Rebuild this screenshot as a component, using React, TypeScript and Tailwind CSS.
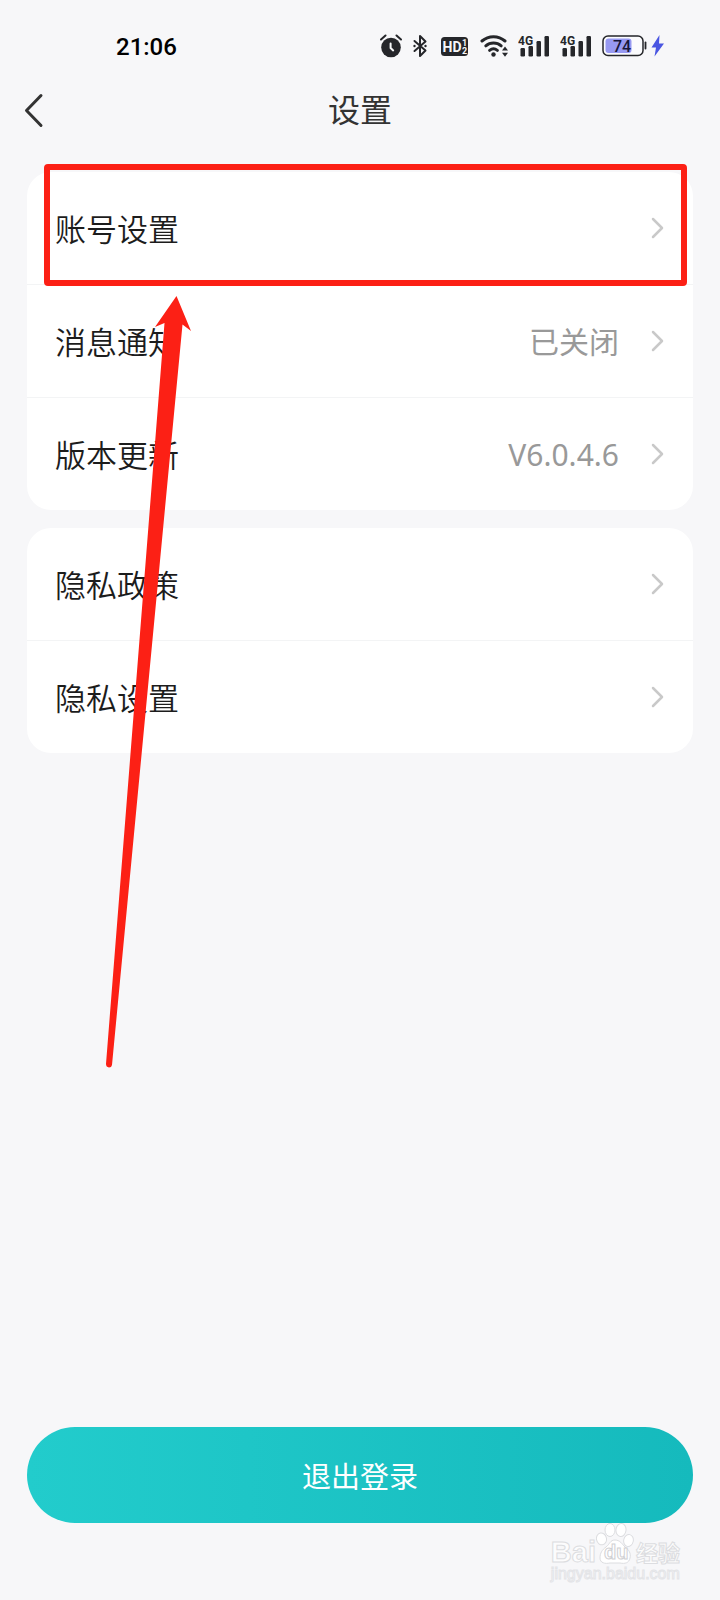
import clsx from "clsx";

type Row = { label: string; value?: string; highlighted?: boolean };

const groups: Row[][] = [
  [
    { label: "账号设置", highlighted: true },
    { label: "消息通知", value: "已关闭" },
    { label: "版本更新", value: "V6.0.4.6" },
  ],
  [{ label: "隐私政策" }, { label: "隐私设置" }],
];

function AlarmIcon() {
  return (
    <svg width="22" height="24" viewBox="0 0 22 24" fill="none">
      <circle cx="11" cy="13.5" r="9.8" fill="#25262a" />
      <path d="M1 5.5 5.5 1.5M21 5.5 16.5 1.5" stroke="#25262a" strokeWidth="2" strokeLinecap="round" />
      <path d="M10.6 9.5v4.5l2.6 2.4" stroke="#f6f7f9" strokeWidth="2" strokeLinecap="round" strokeLinejoin="round" />
    </svg>
  );
}

function BluetoothIcon() {
  return (
    <svg width="16" height="24" viewBox="0 0 16 24" fill="none">
      <path
        d="m2.500 7 11 9.500L8 22V2l5.500 5.500L2.500 17"
        stroke="#25262a"
        strokeWidth="2"
        strokeLinecap="round"
        strokeLinejoin="round"
      />
      <circle cx="2.500" cy="12" r="1.200" fill="#25262a" />
      <circle cx="13.500" cy="12" r="1.200" fill="#25262a" />
    </svg>
  );
}

function HdIcon() {
  return (
    <svg width="32" height="24" viewBox="0 0 32 24">
      <rect x="3" y="3" width="27" height="19" rx="3.500" fill="#25262a" />
      <g fill="#f6f7f9" fontFamily="Roboto, sans-serif" fontWeight="700">
        <text x="4.500" y="17.500" fontSize="14">HD</text>
        <text x="24" y="12" fontSize="9">1</text>
        <text x="24" y="20" fontSize="9">2</text>
      </g>
    </svg>
  );
}

function WifiIcon() {
  return (
    <svg width="28" height="24" viewBox="0 0 28 24" fill="none">
      <g stroke="#25262a" strokeWidth="3" strokeLinecap="round">
        <path d="M2 7a17.500 17.500 0 0 1 23 0" />
        <path d="M5.800 11.800a11.800 11.800 0 0 1 15.400 0" />
        <path d="M9.600 16.300a6.200 6.200 0 0 1 7.800 0" />
      </g>
      <circle cx="13.500" cy="20.500" r="2.200" fill="#25262a" />
      <path d="m22 16.500 3-4 3 4zM22 18.800h6l-3 4z" fill="#25262a" />
    </svg>
  );
}

function SignalIcon() {
  return (
    <svg width="32" height="24" viewBox="0 0 32 24">
      <text x="0" y="11" fontSize="12" fontFamily="Roboto, sans-serif" fontWeight="700" fill="#25262a">
        4G
      </text>
      <g fill="#25262a">
        <rect x="2.500" y="14" width="4.500" height="8.500" rx="1.200" />
        <rect x="10.500" y="12" width="4.500" height="10.500" rx="1.200" />
        <rect x="18.500" y="7" width="4.500" height="15.500" rx="1.200" />
        <rect x="26.500" y="2" width="4.500" height="20.500" rx="1.200" />
      </g>
    </svg>
  );
}

function BatteryIcon() {
  return (
    <svg width="62" height="24" viewBox="0 0 62 24">
      <rect x="1" y="2" width="40" height="19.500" rx="5" fill="#fbfbfd" stroke="#25262a" strokeWidth="1.500" />
      <rect x="3.500" y="4.500" width="26" height="14.500" rx="3" fill="#9799f2" />
      <path d="M43.500 8.500v6" stroke="#25262a" strokeWidth="1.800" strokeLinecap="round" />
      <text x="11" y="17.500" fontSize="16" fontFamily="Roboto, sans-serif" fontWeight="500" fill="#17173a">
        74
      </text>
      <path d="M57.500 1 49.500 13.500H54L52.500 22.500 62 9.500H57z" fill="#4a56e2" />
    </svg>
  );
}

function Chevron() {
  return (
    <svg width="14" height="24" viewBox="0 0 14 24" fill="none">
      <path d="m2 3 9 9-9 9" stroke="#c9c9c9" strokeWidth="2.500" strokeLinecap="round" strokeLinejoin="round" />
    </svg>
  );
}

function SettingRow({ label, value, highlighted }: Row) {
  return (
    <li className="relative border-b border-[#f3f4f5] last:border-b-0">
      <a href="#" className="flex h-28 items-center px-7">
        <span className="pt-0.5 text-[31px] font-[350] text-[#1c1c1c]">{label}</span>
        {value && <span className="ml-auto text-[30px] text-[#999999]">{value}</span>}
        <span className={clsx(value ? "ml-8" : "ml-auto")}>
          <Chevron />
        </span>
      </a>
      {highlighted && (
        <div className="absolute -top-2 right-1.5 -bottom-0.5 left-[17px] rounded-sm border-6 border-[#fc2015]" />
      )}
    </li>
  );
}

function PointerArrow() {
  return (
    <svg
      className="pointer-events-none absolute top-[296px] left-[100px]"
      width="96"
      height="776"
      viewBox="0 0 96 776"
    >
      <path
        d="M76.500 0 91 35 82.500 28.500 12 769Q11.500 771.500 9 771.500 6 771 6 768L64.500 27 55 31z"
        fill="#fc2015"
      />
    </svg>
  );
}

function Watermark() {
  return (
    <div className="pointer-events-none absolute right-10 bottom-4 flex flex-col">
      <div className="flex items-end font-bold text-[#fcfcfd]">
        <span className="font-[Liberation_Sans] text-[29px] leading-6 [-webkit-text-stroke:1px_#dcdde0]">Bai</span>
        <svg width="38" height="42" viewBox="0 0 38 42">
          <g fill="#fff" stroke="#dcdde0" strokeWidth="1">
            <ellipse cx="5.500" cy="17" rx="5" ry="6" transform="rotate(-12 5 17)" />
            <ellipse cx="14" cy="8" rx="5" ry="6.500" />
            <ellipse cx="25" cy="8" rx="5" ry="6.500" transform="rotate(8 25 8)" />
            <ellipse cx="32.500" cy="18.500" rx="4.800" ry="6" transform="rotate(12 32.500 18.500)" />
            <path d="M19 18c5 0 7 4 10 7 4 3 6 6 5 11s-5 6-10 5h-10c-5 1-10 0-10-5s2-8 6-11 4-7 9-7z" />
          </g>
          <text
            x="8"
            y="37"
            fontSize="20"
            fontFamily="Liberation Sans, sans-serif"
            fontWeight="700"
            fill="#fff"
            stroke="#cfd0d3"
            strokeWidth="1"
          >
            du
          </text>
        </svg>
        <span className="pl-0.5 text-[22px] leading-6 [-webkit-text-stroke:1px_#dcdde0]">经验</span>
      </div>
      <span className="font-[Liberation_Sans] text-base leading-5 text-[#fcfcfd] [-webkit-text-stroke:1px_#e3e4e7]">
        jingyan.baidu.com
      </span>
    </div>
  );
}

export default function App() {
  return (
    <div className="relative flex min-h-screen flex-col bg-[#f7f7f9] font-['Noto_Sans','Noto_Sans_CJK_SC',sans-serif]">
      <div className="flex h-[72px] items-center justify-between pt-5 pr-14 pl-29">
        <span className="pt-0.5 font-[Roboto] text-2xl font-medium text-black">21:06</span>
        <div className="flex items-center gap-2.5">
          <AlarmIcon />
          <BluetoothIcon />
          <HdIcon />
          <WifiIcon />
          <SignalIcon />
          <SignalIcon />
          <BatteryIcon />
        </div>
      </div>

      <header className="grid h-[76px] grid-cols-3 items-center px-6">
        <button type="button" aria-label="返回" className="w-fit">
          <svg width="20" height="36" viewBox="0 0 20 36" fill="none">
            <path d="M17 3.500 2.500 18.500 17 33.500" stroke="#333" strokeWidth="3" strokeLinecap="round" strokeLinejoin="round" />
          </svg>
        </button>
        <h1 className="text-center text-[32px] text-[#333333]">设置</h1>
      </header>

      <main className="flex flex-col gap-4.5 px-[27px] pt-6">
        {groups.map((rows, i) => (
          <ul key={i} className="rounded-3xl bg-white">
            {rows.map((row) => (
              <SettingRow key={row.label} {...row} />
            ))}
          </ul>
        ))}
      </main>

      <footer className="mt-auto px-[27px] pb-[77px]">
        <button
          type="button"
          className="h-24 w-full rounded-full bg-linear-to-r from-[#22cccc] to-[#15babd] pt-1 text-[29px] text-white"
        >
          退出登录
        </button>
      </footer>

      <PointerArrow />
      <Watermark />
    </div>
  );
}
